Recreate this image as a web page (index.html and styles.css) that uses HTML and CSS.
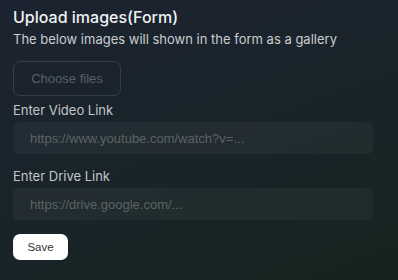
FILE: index.html
```html
<!DOCTYPE html>
<html lang="en">
<head>
    <meta charset="UTF-8">
    <meta name="viewport" content="width=device-width, initial-scale=1.0">
    <title>Upload images</title>
    <link rel="stylesheet" href="styles.css">
</head>
<body>
    <form class="gallery-form">
        <h1>Upload images(Form)</h1>
        <p class="subtitle">The below images will shown in the form as a gallery</p>

        <input type="file" id="images" multiple style="display: none">
        <button type="button" class="choose-btn">Choose files</button>

        <div class="field">
            <label for="videoLink">Enter Video Link</label>
            <input type="text" id="videoLink" placeholder="https://www.youtube.com/watch?v=...">
        </div>

        <div class="field">
            <label for="driveLink">Enter Drive Link</label>
            <input type="text" id="driveLink" placeholder="https://drive.google.com/...">
        </div>

        <button type="submit" class="save-btn">Save</button>
    </form>
</body>
</html>
```

FILE: styles.css
```css
html, body {
    height: 100%;
}
body {
    margin: 0;
    padding: 7px 13px 0;
    box-sizing: border-box;
    font-family: Inter, "Liberation Sans", sans-serif;
    color: #f1f2f3;
    background: linear-gradient(160deg, #1c2330 0%, #19242a 50%, #15241f 100%);
}
.gallery-form {
    display: flex;
    flex-direction: column;
    align-items: flex-start;
}
h1 {
    margin: 0;
    font-size: 16px;
    line-height: 20px;
    font-weight: 500;
}
.subtitle {
    margin: 3px 0 0;
    font-size: 13px;
    line-height: 18px;
    color: #c9cdd0;
}
.choose-btn {
    margin-top: 13px;
    width: 108px;
    height: 35px;
    background: transparent;
    border: 1px solid #353f43;
    border-radius: 7px;
    color: #566064;
    font-family: "Liberation Sans", Arial, sans-serif;
    font-size: 13px;
}
.field {
    display: flex;
    flex-direction: column;
    gap: 3px;
    margin-top: 5px;
    width: 360px;
}
.field + .field {
    margin-top: 13px;
}
label {
    font-size: 13px;
    line-height: 18px;
    color: #c3c7c8;
}
input[type="text"] {
    height: 32px;
    box-sizing: border-box;
    padding: 0 17px;
    border: none;
    border-radius: 6px;
    background: rgba(255, 255, 255, 0.04);
    color: #d0d4d4;
    font-family: "Liberation Sans", Arial, sans-serif;
    font-size: 13px;
    outline: none;
}
input[type="text"]::placeholder {
    color: #5b6462;
}
.save-btn {
    margin-top: 14px;
    width: 55px;
    height: 26px;
    background: #fff;
    border: none;
    border-radius: 7px;
    color: #333;
    font-family: "Liberation Sans", Arial, sans-serif;
    font-size: 11.5px;
}
```
